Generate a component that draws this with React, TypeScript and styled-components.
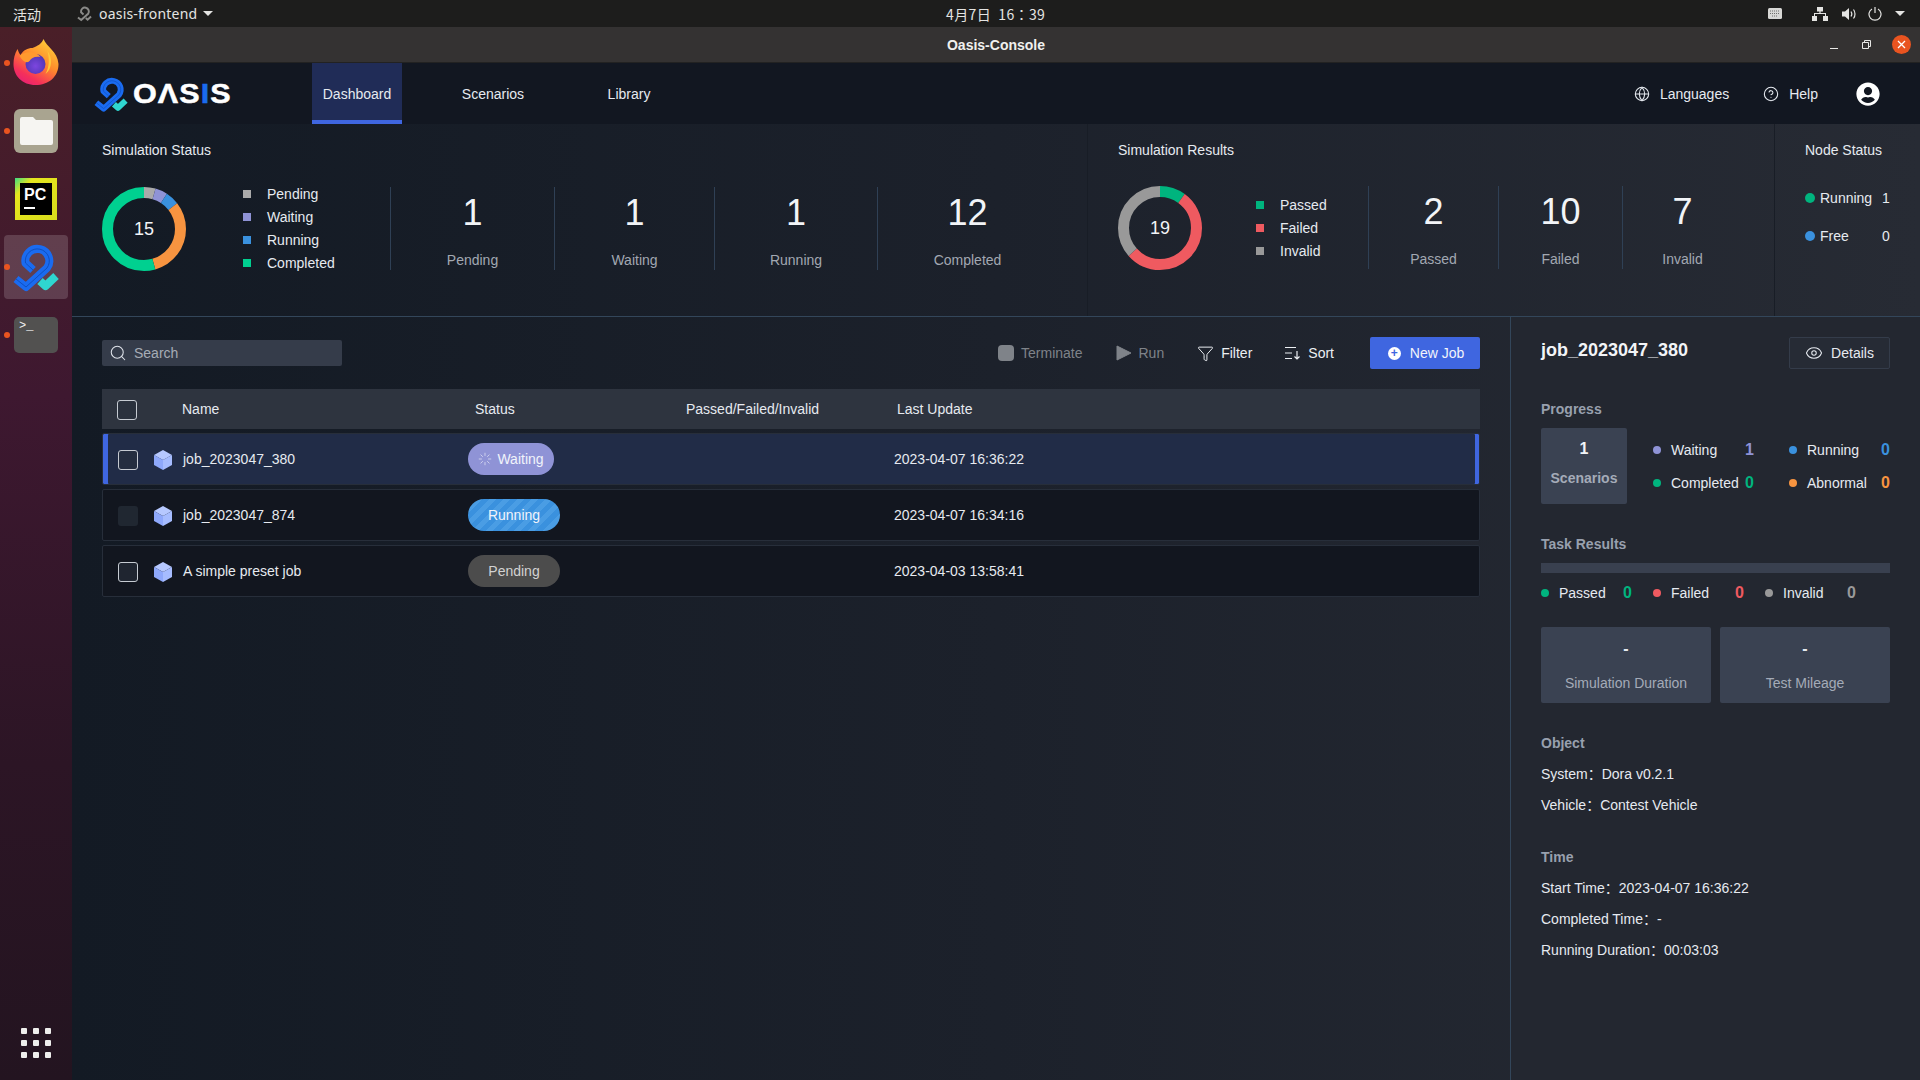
import styled, { createGlobalStyle } from "styled-components";
import { CircleHelp, Eye, Filter, Globe, Loader, Search } from "lucide-react";
import { FaUserCircle } from "react-icons/fa";

const GlobalStyle = createGlobalStyle`
    html, body {
        margin: 0;
        height: 100%;
        overflow: hidden;
        background: #141b25;
    }
    * {
        box-sizing: border-box;
    }
    body {
        font-family: "Liberation Sans", "Noto Sans CJK SC", sans-serif;
        font-size: 14px;
        color: #e6eaf0;
    }
`;

const Screen = styled.div`
    width: 1920px;
    height: 1080px;
    display: flex;
    flex-direction: column;
`;

const TopBar = styled.div`
    height: 27px;
    flex: none;
    display: flex;
    align-items: center;
    background: #1d1d1c;
    color: #e4e4e2;
    font-family: "Noto Sans CJK SC", "Noto Sans", sans-serif;
    font-size: 14px;
`;

const Activities = styled.div`
    width: 76px;
    padding-left: 13px;
`;

const AppMenu = styled.div`
    width: 870px;
    display: flex;
    align-items: center;
    gap: 6px;
    font-family: "Noto Sans", sans-serif;
    letter-spacing: 0.2px;
`;

const Caret = styled.span`
    width: 0;
    height: 0;
    border-left: 5px solid transparent;
    border-right: 5px solid transparent;
    border-top: 5px solid #e4e4e2;
`;

const Clock = styled.div`
    font-family: "Noto Sans CJK TC", "Noto Sans CJK SC", sans-serif;
    font-size: 14px;
    letter-spacing: 0.4px;
    white-space: pre;
`;

const Tray = styled.div`
    margin-left: auto;
    display: flex;
    align-items: center;
    padding-right: 15px;
`;

const TrayIcon = styled.svg<{ $gap: number }>`
    margin-left: ${(p) => p.$gap}px;
    display: block;
`;

const Desktop = styled.div`
    flex: 1;
    display: flex;
    min-height: 0;
`;

const Dock = styled.div`
    width: 72px;
    flex: none;
    display: flex;
    flex-direction: column;
    align-items: center;
    padding-top: 4px;
    background: linear-gradient(180deg, #4a1f28 0%, #3e1830 35%, #2c1525 70%, #231420 100%);
`;

const DockItem = styled.div<{ $active?: boolean }>`
    position: relative;
    width: 64px;
    height: 64px;
    margin-bottom: 4px;
    display: flex;
    align-items: center;
    justify-content: center;
    border-radius: 4px;
    background: ${(p) => (p.$active ? "rgba(255,255,255,0.16)" : "transparent")};
`;

const RunDot = styled.span`
    position: absolute;
    left: 0;
    top: 29px;
    width: 6px;
    height: 6px;
    border-radius: 50%;
    background: #e95420;
`;

const AppsGrid = styled.div`
    margin-top: auto;
    margin-bottom: 22px;
    display: grid;
    grid-template-columns: repeat(3, 6px);
    gap: 6px;
`;

const AppsDot = styled.span`
    width: 6px;
    height: 6px;
    border-radius: 1px;
    background: #eeeeec;
`;

const FirefoxSvg = styled.svg`
    margin-bottom: 3px;
`;

const FilesIcon = styled.div`
    width: 44px;
    height: 44px;
    border-radius: 6px;
    background: #a9a490;
    display: flex;
    align-items: center;
    justify-content: center;
`;

const TerminalIcon = styled.div`
    width: 44px;
    height: 36px;
    border-radius: 5px;
    background: #525150;
    color: #f0f0f0;
    font-family: "Liberation Mono", monospace;
    font-size: 12px;
    line-height: 12px;
    padding: 3px 0 0 5px;
    white-space: pre;
`;

const PyCharmIcon = styled.div`
    width: 42px;
    height: 42px;
    padding: 5px;
    background: linear-gradient(135deg, #3ddc84 0%, #e6e61e 22%, #d8dc1c 100%);
`;

const PyCharmInner = styled.div`
    width: 100%;
    height: 100%;
    background: #000;
    color: #fff;
    font-weight: 700;
    font-size: 16px;
    line-height: 15px;
    padding: 4px 0 0 4px;
`;

const PyCharmBar = styled.div`
    width: 11px;
    height: 2px;
    margin-top: 5px;
    background: #fff;
`;

const AppWindow = styled.div`
    flex: 1;
    min-width: 0;
    display: flex;
    flex-direction: column;
`;

const TitleBar = styled.div`
    position: relative;
    height: 36px;
    flex: none;
    display: flex;
    align-items: center;
    justify-content: center;
    background: #343232;
    border-bottom: 1px solid #222;
    font-weight: 700;
    font-size: 14px;
    color: #f0f0ee;
`;

const WindowButtons = styled.div`
    position: absolute;
    right: 9px;
    top: 8px;
    display: flex;
    align-items: center;
    gap: 21px;
`;

const RestoreIcon = styled.svg`
    margin-left: 3px;
    margin-right: -3px;
`;

const CloseButton = styled.div`
    width: 19px;
    height: 19px;
    margin-left: 3px;
    border-radius: 50%;
    background: #e95420;
    display: flex;
    align-items: center;
    justify-content: center;
`;

const Nav = styled.div`
    height: 61px;
    flex: none;
    display: flex;
    align-items: stretch;
    padding-left: 20px;
    background: #121721;
`;

const Logo = styled.div`
    width: 220px;
    display: flex;
    align-items: center;
    gap: 3px;
`;

const LogoText = styled.span`
    font-family: "Liberation Sans", sans-serif;
    font-weight: 700;
    font-size: 28px;
    letter-spacing: 1px;
    color: #fff;
    -webkit-text-stroke: 0.5px currentColor;
    transform: scaleX(1.09);
    transform-origin: left center;
`;

const LogoAccent = styled.span`
    color: #1a6bf0;
`;

const Tabs = styled.div`
    display: flex;
    gap: 46px;
`;

const Tab = styled.div<{ $active?: boolean }>`
    width: 90px;
    display: flex;
    align-items: center;
    justify-content: center;
    background: ${(p) => (p.$active ? "#202c57" : "transparent")};
    border-bottom: 4px solid ${(p) => (p.$active ? "#3f66e0" : "transparent")};
    border-top: 4px solid transparent;
`;

const NavRight = styled.div`
    margin-left: auto;
    padding-right: 40px;
    display: flex;
    align-items: center;
`;

const NavLink = styled.div<{ $gap: number }>`
    display: flex;
    align-items: center;
    gap: 10px;
    margin-right: ${(p) => p.$gap}px;
`;

const Content = styled.div`
    flex: 1;
    min-height: 0;
    display: flex;
    flex-direction: column;
    background: linear-gradient(90deg, #131a24 0%, #1c212b 50%, #272b34 100%);
`;

const StatsBar = styled.div`
    height: 193px;
    flex: none;
    display: flex;
    border-bottom: 1px solid #33465a;
`;

const StatsPanel = styled.div<{ $w?: number; $border?: boolean }>`
    width: ${(p) => (p.$w ? `${p.$w}px` : "auto")};
    flex: ${(p) => (p.$w ? "none" : "1")};
    padding: 18px 0 0 30px;
    border-right: ${(p) => (p.$border ? "1px solid #181d26" : "none")};
`;

const PanelTitle = styled.div`
    line-height: 16px;
    font-size: 14px;
`;

const PanelBody = styled.div<{ $top: number }>`
    display: flex;
    height: 84px;
    margin-top: ${(p) => p.$top}px;
`;

const DonutBox = styled.div`
    position: relative;
    width: 84px;
    height: 84px;
    flex: none;
`;

const DonutLabel = styled.div`
    position: absolute;
    inset: 0;
    display: flex;
    align-items: center;
    justify-content: center;
    font-size: 18px;
    color: #f2f4f7;
`;

const Legend = styled.div<{ $w: number; $left: number; $lift?: number }>`
    width: ${(p) => p.$w}px;
    height: 84px;
    margin-left: ${(p) => p.$left}px;
    margin-top: ${(p) => -(p.$lift ?? 0)}px;
    display: flex;
    flex-direction: column;
    justify-content: center;
`;

const LegendRow = styled.div`
    height: 23px;
    flex: none;
    display: flex;
    align-items: center;
    gap: 16px;
`;

const LegendSquare = styled.span<{ $c: string }>`
    width: 8px;
    height: 8px;
    background: ${(p) => p.$c};
`;

const StatCell = styled.div<{ $w: number }>`
    width: ${(p) => p.$w}px;
    height: 83px;
    display: flex;
    flex-direction: column;
    align-items: center;
    padding-top: 6px;
    border-left: 1px solid #2f4055;
`;

const StatNumber = styled.div`
    font-size: 36px;
    line-height: 40px;
    color: #f2f4f7;
`;

const StatLabel = styled.div`
    margin-top: 19px;
    line-height: 16px;
    color: #a2a8b2;
`;

const NodeRows = styled.div`
    margin-top: 21px;
`;

const NodeRow = styled.div`
    height: 38px;
    display: grid;
    grid-template-columns: 15px 62px auto;
    align-items: center;
`;

const Dot = styled.span<{ $c: string; $size?: number }>`
    width: ${(p) => p.$size ?? 8}px;
    height: ${(p) => p.$size ?? 8}px;
    border-radius: 50%;
    background: ${(p) => p.$c};
`;

const Main = styled.div`
    flex: 1;
    min-height: 0;
    display: flex;
`;

const JobsPane = styled.div`
    flex: 1;
    min-width: 0;
    padding: 20px 30px 0;
`;

const Toolbar = styled.div`
    height: 32px;
    display: flex;
    align-items: center;
`;

const SearchBox = styled.div`
    width: 240px;
    height: 26px;
    display: flex;
    align-items: center;
    gap: 7px;
    padding-left: 7px;
    border-radius: 2px;
    background: #353c4a;
    color: #a6acb6;
`;

const ToolActions = styled.div`
    margin-left: auto;
    display: flex;
    align-items: center;
    gap: 33px;
`;

const ToolButton = styled.div<{ $off?: boolean }>`
    display: flex;
    align-items: center;
    gap: 7px;
    color: ${(p) => (p.$off ? "#7f8389" : "#eceff3")};
`;

const StopShape = styled.span`
    width: 16px;
    height: 16px;
    border-radius: 4px;
    background: #7f8389;
`;

const NewJobButton = styled.div`
    width: 110px;
    height: 32px;
    margin-left: 3px;
    padding-left: 2px;
    display: flex;
    align-items: center;
    justify-content: center;
    gap: 9px;
    border-radius: 2px;
    background: #3f66e0;
    color: #f2f4fb;
`;

const PlusCircle = styled.span`
    width: 13px;
    height: 13px;
    border-radius: 50%;
    background: #fff;
    color: #3f66e0;
    font-weight: 700;
    font-size: 12px;
    line-height: 13px;
    text-align: center;
`;

const TableHead = styled.div`
    height: 40px;
    margin-top: 20px;
    display: grid;
    grid-template-columns: 65px 293px 211px 211px 1fr;
    align-items: center;
    padding-left: 15px;
    background: #2e343f;
`;

const CheckBox = styled.span<{ $muted?: boolean }>`
    display: block;
    width: 20px;
    height: 20px;
    margin-top: 1px;
    border-radius: 3px;
    border: ${(p) => (p.$muted ? "none" : "1px solid #c6cbd2")};
    background: ${(p) => (p.$muted ? "#202731" : "rgba(40,48,60,0.6)")};
`;

const Rows = styled.div`
    margin-top: 4px;
    display: flex;
    flex-direction: column;
    gap: 4px;
`;

const Row = styled.div<{ $selected?: boolean }>`
    height: 52px;
    display: grid;
    grid-template-columns: 36px 29px 285px 426px 1fr;
    align-items: center;
    padding-left: 15px;
    border: 1px solid #272e3a;
    border-radius: 2px;
    background: ${(p) => (p.$selected ? "#212c47" : "#12161f")};
    box-shadow: ${(p) => (p.$selected ? "inset 5px 0 #3f66e0, inset -4px 0 #3f66e0" : "none")};
`;

const CubeIcon = styled.svg`
    margin-top: 2px;
`;

const Pill = styled.div<{ $kind: "waiting" | "running" | "pending" }>`
    width: ${(p) => (p.$kind === "waiting" ? 86 : 92)}px;
    height: 32px;
    border-radius: 16px;
    display: flex;
    align-items: center;
    justify-content: center;
    gap: 5px;
    color: ${(p) => (p.$kind === "pending" ? "#d2d2d2" : "#f1f3fb")};
    background: ${(p) =>
        p.$kind === "waiting"
            ? "#8f93d6"
            : p.$kind === "pending"
              ? "#4c4c4c"
              : "repeating-linear-gradient(135deg, #3a91de 0 5px, #4a9de4 5px 10px)"};
`;

const DetailPane = styled.div`
    width: 410px;
    flex: none;
    padding: 20px 30px 0;
    border-left: 1px solid #33465a;
    background: #232730;
`;

const DetailHead = styled.div`
    height: 32px;
    display: flex;
    align-items: flex-start;
    justify-content: space-between;
`;

const JobTitle = styled.div`
    font-size: 18px;
    font-weight: 700;
    line-height: 26px;
    color: #f2f4f7;
`;

const DetailsButton = styled.div`
    width: 101px;
    height: 32px;
    display: flex;
    align-items: center;
    justify-content: center;
    gap: 8px;
    border: 1px solid #343c4a;
    border-radius: 2px;
    background: #262b35;
`;

const SectionTitle = styled.div<{ $top: number }>`
    margin-top: ${(p) => p.$top}px;
    font-weight: 700;
    line-height: 16px;
    color: #98a0ae;
`;

const ProgressRow = styled.div`
    margin-top: 11px;
    display: flex;
    align-items: center;
`;

const ScenarioBox = styled.div`
    width: 86px;
    height: 76px;
    flex: none;
    display: flex;
    flex-direction: column;
    align-items: center;
    padding-top: 11px;
    border-radius: 2px;
    background: #3a4252;
`;

const ScenarioCount = styled.div`
    font-size: 16px;
    font-weight: 700;
    line-height: 20px;
    color: #f2f4f7;
`;

const ScenarioLabel = styled.div`
    margin-top: 11px;
    font-weight: 700;
    line-height: 16px;
    color: #a4abb8;
`;

const ProgressGrid = styled.div`
    margin-left: 26px;
    flex: 1;
    display: grid;
    grid-template-columns: 101px 101px;
    column-gap: 35px;
    row-gap: 13px;
`;

const ProgressItem = styled.div`
    height: 20px;
    display: grid;
    grid-template-columns: 18px 1fr auto;
    align-items: center;
`;

const Count = styled.span<{ $c: string }>`
    font-size: 16px;
    font-weight: 700;
    color: ${(p) => p.$c};
`;

const ResultBar = styled.div`
    height: 10px;
    margin-top: 11px;
    background: #39404f;
`;

const ResultLegend = styled.div`
    margin-top: 10px;
    display: grid;
    grid-template-columns: repeat(3, 112px);
`;

const ResultItem = styled.div`
    height: 20px;
    display: grid;
    grid-template-columns: 18px 64px auto;
    align-items: center;
`;

const MetricRow = styled.div`
    margin-top: 24px;
    display: grid;
    grid-template-columns: 170px 170px;
    column-gap: 9px;
`;

const MetricBox = styled.div`
    height: 76px;
    display: flex;
    flex-direction: column;
    align-items: center;
    padding-top: 12px;
    border-radius: 2px;
    background: #3a4252;
`;

const MetricValue = styled.div`
    font-size: 16px;
    font-weight: 700;
    line-height: 20px;
    color: #e6eaf0;
`;

const MetricLabel = styled.div`
    margin-top: 16px;
    line-height: 16px;
    color: #a4abb8;
`;

const InfoRow = styled.div`
    margin-top: 15px;
    line-height: 16px;
`;

interface Slice {
    from: number;
    to: number;
    color: string;
}

const Donut = ({ total, slices }: { total: number; slices: Slice[] }) => {
    const r = 36.5;
    const len = 2 * Math.PI * r;
    return (
        <DonutBox>
            <svg width="84" height="84" viewBox="0 0 84 84">
                <g transform="rotate(-90 42 42)">
                    {slices.map((s) => (
                        <circle
                            key={s.from}
                            cx="42"
                            cy="42"
                            r={r}
                            fill="none"
                            stroke={s.color}
                            strokeWidth="11"
                            strokeDasharray={`${((s.to - s.from) / 360) * len} ${len}`}
                            strokeDashoffset={-(s.from / 360) * len}
                        />
                    ))}
                </g>
            </svg>
            <DonutLabel>{total}</DonutLabel>
        </DonutBox>
    );
};

const loopPath = "M16 47 L26 55 L47 36 A12 12 0 1 0 25.5 31 L33 38";

const OasisMark = ({ size }: { size: number }) => (
    <svg width={size} height={size} viewBox="10 9 52 52">
        <path d={loopPath} fill="none" stroke="#1a6bf0" strokeWidth="8" strokeLinejoin="round" />
        <path d={loopPath} fill="none" stroke="#0f4fc0" strokeWidth="1" />
        <path d="M40 49 L45.5 54 L56 44" fill="none" stroke="#2fd6d0" strokeWidth="8" strokeLinejoin="round" />
    </svg>
);

const FirefoxIcon = () => (
    <FirefoxSvg width="46" height="46" viewBox="0 0 45 46">
        <defs>
            <linearGradient id="ffBody" x1="0.8" y1="0" x2="0.2" y2="1">
                <stop offset="0" stopColor="#ffd23a" />
                <stop offset="0.45" stopColor="#ff8a2b" />
                <stop offset="0.8" stopColor="#f5305a" />
                <stop offset="1" stopColor="#e61f78" />
            </linearGradient>
            <radialGradient id="ffGlobe" cx="0.5" cy="0.6" r="0.6">
                <stop offset="0" stopColor="#7d46e0" />
                <stop offset="1" stopColor="#4c36b0" />
            </radialGradient>
        </defs>
        <path
            d="M30 0 C33 8 44 12 45 25 C45 38 35 46 22 46 C9 46 0 37 0 25 C0 20 1 15 4 10 C5 13 6 15 7 16 C10 11 14 9 19 9 C24 7 28 5 30 0 Z"
            fill="url(#ffBody)"
        />
        <circle cx="22" cy="25" r="10" fill="url(#ffGlobe)" />
        <path d="M6 17 C11 12 22 12 27 18 C21 17 18 19 16 22 C13 25 9 22 6 17 Z" fill="#ff9a2e" />
        <path d="M34 12 C39 18 39 30 32 35 C36 28 36 20 34 12 Z" fill="#ffc83a" />
    </FirefoxSvg>
);

const Cube = () => (
    <CubeIcon width="18" height="20" viewBox="0 0 18 20">
        <path d="M9 0 L18 5 L9 10 L0 5 Z" fill="#b6c8ff" />
        <path d="M0 5 L9 10 V20 L0 15 Z" fill="#8ea8fb" />
        <path d="M18 5 L9 10 V20 L18 15 Z" fill="#a6bcff" />
    </CubeIcon>
);

const jobs = [
    { name: "job_2023047_380", status: "waiting" as const, date: "2023-04-07 16:36:22" },
    { name: "job_2023047_874", status: "running" as const, date: "2023-04-07 16:34:16" },
    { name: "A simple preset job", status: "pending" as const, date: "2023-04-03 13:58:41" },
];

const statusText = { waiting: "Waiting", running: "Running", pending: "Pending" };

const statusLegend = [
    { label: "Pending", color: "#aaaaaa" },
    { label: "Waiting", color: "#8f93d6" },
    { label: "Running", color: "#3a91de" },
    { label: "Completed", color: "#00d090" },
];

const resultLegend = [
    { label: "Passed", color: "#00b47e" },
    { label: "Failed", color: "#ef5a60" },
    { label: "Invalid", color: "#999999" },
];

const statusCells = [
    { value: 1, label: "Pending", w: 164 },
    { value: 1, label: "Waiting", w: 160 },
    { value: 1, label: "Running", w: 163 },
    { value: 12, label: "Completed", w: 180 },
];

const resultCells = [
    { value: 2, label: "Passed", w: 130 },
    { value: 10, label: "Failed", w: 124 },
    { value: 7, label: "Invalid", w: 120 },
];

const progressItems = [
    { label: "Waiting", value: 1, color: "#8f93d6" },
    { label: "Running", value: 0, color: "#3a91de" },
    { label: "Completed", value: 0, color: "#00b47e" },
    { label: "Abnormal", value: 0, color: "#f79440" },
];

const taskItems = [
    { label: "Passed", color: "#00b47e" },
    { label: "Failed", color: "#ef5a60" },
    { label: "Invalid", color: "#999999" },
];

const App = () => {
    return (
        <Screen>
            <GlobalStyle />
            <TopBar>
                <Activities>活动</Activities>
                <AppMenu>
                    <svg width="17" height="17" viewBox="10 9 52 52">
                        <path d={loopPath} fill="none" stroke="#8a8a88" strokeWidth="6" />
                        <path d="M40 49 L45.5 54 L56 44" fill="none" stroke="#8a8a88" strokeWidth="6" />
                    </svg>
                    oasis-frontend
                    <Caret />
                </AppMenu>
                <Clock>4月7日  16：39</Clock>
                <Tray>
                    <TrayIcon $gap={0} width="14" height="11" viewBox="0 0 14 11">
                        <rect width="14" height="11" rx="1.5" fill="#d8d8d6" />
                        <path
                            d="M2 3 H12 M2 5.5 H12 M4 8 H10"
                            stroke="#6e6e6c"
                            strokeWidth="1"
                            strokeDasharray="1 1"
                        />
                    </TrayIcon>
                    <TrayIcon $gap={30} width="16" height="14" viewBox="0 0 16 14">
                        <path
                            d="M5 0 H11 V4.5 H8.6 V6 H14 V9 H16 V14 H11 V9 H13 V7 H3 V9 H5 V14 H0 V9 H2 V6 H7.4 V4.5 H5 Z"
                            fill="#e4e4e2"
                        />
                    </TrayIcon>
                    <TrayIcon $gap={14} width="15" height="14" viewBox="0 0 15 14">
                        <path d="M0 4.5 H3 L7 1 V13 L3 9.5 H0 Z" fill="#e4e4e2" />
                        <path
                            d="M9 4.5 C10 6 10 8 9 9.5 M11.5 2.5 C13.5 5 13.5 9 11.5 11.5"
                            fill="none"
                            stroke="#e4e4e2"
                            strokeWidth="1.2"
                        />
                    </TrayIcon>
                    <TrayIcon $gap={11} width="14" height="14" viewBox="0 0 14 14">
                        <path
                            d="M4 2 A6 6 0 1 0 10 2 M7 0 V6"
                            fill="none"
                            stroke="#e4e4e2"
                            strokeWidth="1.2"
                        />
                    </TrayIcon>
                    <TrayIcon $gap={13} width="10" height="5" viewBox="0 0 10 5">
                        <path d="M0 0 H10 L5 5 Z" fill="#e4e4e2" />
                    </TrayIcon>
                </Tray>
            </TopBar>
            <Desktop>
                <Dock>
                    <DockItem>
                        <RunDot />
                        <FirefoxIcon />
                    </DockItem>
                    <DockItem>
                        <RunDot />
                        <FilesIcon>
                            <svg width="33" height="28" viewBox="0 0 33 28">
                                <path
                                    d="M2 0 H13 L16 3 H31 A2 2 0 0 1 33 5 V26 A2 2 0 0 1 31 28 H2 A2 2 0 0 1 0 26 V2 A2 2 0 0 1 2 0 Z"
                                    fill="#f6f5f2"
                                />
                            </svg>
                        </FilesIcon>
                    </DockItem>
                    <DockItem>
                        <PyCharmIcon>
                            <PyCharmInner>
                                PC
                                <PyCharmBar />
                            </PyCharmInner>
                        </PyCharmIcon>
                    </DockItem>
                    <DockItem $active>
                        <RunDot />
                        <OasisMark size={52} />
                    </DockItem>
                    <DockItem>
                        <RunDot />
                        <TerminalIcon>{">_"}</TerminalIcon>
                    </DockItem>
                    <AppsGrid>
                        {Array.from({ length: 9 }).map((_, i) => (
                            <AppsDot key={i} />
                        ))}
                    </AppsGrid>
                </Dock>
                <AppWindow>
                    <TitleBar>
                        Oasis-Console
                        <WindowButtons>
                            <svg width="8" height="8" viewBox="0 0 8 8">
                                <path d="M0 7.5 H8" stroke="#e8e8e6" />
                            </svg>
                            <RestoreIcon width="9" height="9" viewBox="0 0 9 9">
                                <path
                                    d="M0.5 2.5 H6.5 V8.5 H0.5 Z M2.5 2.5 V0.5 H8.5 V6.5 H6.5"
                                    fill="none"
                                    stroke="#e8e8e6"
                                />
                            </RestoreIcon>
                            <CloseButton>
                                <svg width="9" height="9" viewBox="0 0 9 9">
                                    <path d="M1 1 L8 8 M8 1 L1 8" stroke="#fff" strokeWidth="1.3" />
                                </svg>
                            </CloseButton>
                        </WindowButtons>
                    </TitleBar>
                    <Nav>
                        <Logo>
                            <OasisMark size={38} />
                            <LogoText>
                                OΛS<LogoAccent>I</LogoAccent>S
                            </LogoText>
                        </Logo>
                        <Tabs>
                            <Tab $active>Dashboard</Tab>
                            <Tab>Scenarios</Tab>
                            <Tab>Library</Tab>
                        </Tabs>
                        <NavRight>
                            <NavLink $gap={34}>
                                <Globe size={16} strokeWidth={1.6} />
                                Languages
                            </NavLink>
                            <NavLink $gap={38}>
                                <CircleHelp size={16} strokeWidth={1.6} />
                                Help
                            </NavLink>
                            <FaUserCircle size={24} color="#fff" />
                        </NavRight>
                    </Nav>
                    <Content>
                        <StatsBar>
                            <StatsPanel $w={1016} $border>
                                <PanelTitle>Simulation Status</PanelTitle>
                                <PanelBody $top={29}>
                                    <Donut
                                        total={15}
                                        slices={[
                                            { from: 0, to: 16, color: "#aaaaaa" },
                                            { from: 16, to: 33, color: "#8f93d6" },
                                            { from: 33, to: 52, color: "#3a91de" },
                                            { from: 52, to: 164, color: "#f79440" },
                                            { from: 164, to: 360, color: "#00d090" },
                                        ]}
                                    />
                                    <Legend $w={147} $left={57} $lift={1}>
                                        {statusLegend.map((l) => (
                                            <LegendRow key={l.label}>
                                                <LegendSquare $c={l.color} />
                                                {l.label}
                                            </LegendRow>
                                        ))}
                                    </Legend>
                                    {statusCells.map((c) => (
                                        <StatCell key={c.label} $w={c.w}>
                                            <StatNumber>{c.value}</StatNumber>
                                            <StatLabel>{c.label}</StatLabel>
                                        </StatCell>
                                    ))}
                                </PanelBody>
                            </StatsPanel>
                            <StatsPanel $w={687} $border>
                                <PanelTitle>Simulation Results</PanelTitle>
                                <PanelBody $top={28}>
                                    <Donut
                                        total={19}
                                        slices={[
                                            { from: 0, to: 36, color: "#00b47e" },
                                            { from: 36, to: 228, color: "#ef5a60" },
                                            { from: 228, to: 360, color: "#999999" },
                                        ]}
                                    />
                                    <Legend $w={112} $left={54}>
                                        {resultLegend.map((l) => (
                                            <LegendRow key={l.label}>
                                                <LegendSquare $c={l.color} />
                                                {l.label}
                                            </LegendRow>
                                        ))}
                                    </Legend>
                                    {resultCells.map((c) => (
                                        <StatCell key={c.label} $w={c.w}>
                                            <StatNumber>{c.value}</StatNumber>
                                            <StatLabel>{c.label}</StatLabel>
                                        </StatCell>
                                    ))}
                                </PanelBody>
                            </StatsPanel>
                            <StatsPanel>
                                <PanelTitle>Node Status</PanelTitle>
                                <NodeRows>
                                    <NodeRow>
                                        <Dot $c="#00b47e" $size={10} />
                                        Running
                                        <span>1</span>
                                    </NodeRow>
                                    <NodeRow>
                                        <Dot $c="#3a91de" $size={10} />
                                        Free
                                        <span>0</span>
                                    </NodeRow>
                                </NodeRows>
                            </StatsPanel>
                        </StatsBar>
                        <Main>
                            <JobsPane>
                                <Toolbar>
                                    <SearchBox>
                                        <Search size={18} strokeWidth={1.4} color="#dfe3ea" />
                                        Search
                                    </SearchBox>
                                    <ToolActions>
                                        <ToolButton $off>
                                            <StopShape />
                                            Terminate
                                        </ToolButton>
                                        <ToolButton $off>
                                            <svg width="16" height="16" viewBox="0 0 16 16">
                                                <path d="M1 1 L15 8 L1 15 Z" fill="#7f8389" stroke="#7f8389" strokeLinejoin="round" />
                                            </svg>
                                            Run
                                        </ToolButton>
                                        <ToolButton>
                                            <Filter size={17} strokeWidth={1.4} />
                                            Filter
                                        </ToolButton>
                                        <ToolButton>
                                            <svg width="16" height="16" viewBox="0 0 16 16">
                                                <path
                                                    d="M0 2.5 H11 M0 8 H7 M0 13.5 H7 M12 6 V14 M9.5 11.5 L12 14 L14.5 11.5"
                                                    fill="none"
                                                    stroke="#eceff3"
                                                    strokeWidth="1.2"
                                                />
                                            </svg>
                                            Sort
                                        </ToolButton>
                                        <NewJobButton>
                                            <PlusCircle>+</PlusCircle>
                                            New Job
                                        </NewJobButton>
                                    </ToolActions>
                                </Toolbar>
                                <TableHead>
                                    <CheckBox />
                                    <span>Name</span>
                                    <span>Status</span>
                                    <span>Passed/Failed/Invalid</span>
                                    <span>Last Update</span>
                                </TableHead>
                                <Rows>
                                    {jobs.map((job) => (
                                        <Row key={job.name} $selected={job.status === "waiting"}>
                                            <CheckBox $muted={job.status === "running"} />
                                            <Cube />
                                            <span>{job.name}</span>
                                            <Pill $kind={job.status}>
                                                {job.status === "waiting" && (
                                                    <Loader size={14} strokeWidth={1.5} color="#d5d7f0" />
                                                )}
                                                {statusText[job.status]}
                                            </Pill>
                                            <span>{job.date}</span>
                                        </Row>
                                    ))}
                                </Rows>
                            </JobsPane>
                            <DetailPane>
                                <DetailHead>
                                    <JobTitle>job_2023047_380</JobTitle>
                                    <DetailsButton>
                                        <Eye size={18} strokeWidth={1.4} />
                                        Details
                                    </DetailsButton>
                                </DetailHead>
                                <SectionTitle $top={32}>Progress</SectionTitle>
                                <ProgressRow>
                                    <ScenarioBox>
                                        <ScenarioCount>1</ScenarioCount>
                                        <ScenarioLabel>Scenarios</ScenarioLabel>
                                    </ScenarioBox>
                                    <ProgressGrid>
                                        {progressItems.map((item) => (
                                            <ProgressItem key={item.label}>
                                                <Dot $c={item.color} />
                                                {item.label}
                                                <Count $c={item.color}>{item.value}</Count>
                                            </ProgressItem>
                                        ))}
                                    </ProgressGrid>
                                </ProgressRow>
                                <SectionTitle $top={32}>Task Results</SectionTitle>
                                <ResultBar />
                                <ResultLegend>
                                    {taskItems.map((item) => (
                                        <ResultItem key={item.label}>
                                            <Dot $c={item.color} />
                                            {item.label}
                                            <Count $c={item.color}>0</Count>
                                        </ResultItem>
                                    ))}
                                </ResultLegend>
                                <MetricRow>
                                    <MetricBox>
                                        <MetricValue>-</MetricValue>
                                        <MetricLabel>Simulation Duration</MetricLabel>
                                    </MetricBox>
                                    <MetricBox>
                                        <MetricValue>-</MetricValue>
                                        <MetricLabel>Test Mileage</MetricLabel>
                                    </MetricBox>
                                </MetricRow>
                                <SectionTitle $top={32}>Object</SectionTitle>
                                <InfoRow>System：Dora v0.2.1</InfoRow>
                                <InfoRow>Vehicle：Contest Vehicle</InfoRow>
                                <SectionTitle $top={36}>Time</SectionTitle>
                                <InfoRow>Start Time：2023-04-07 16:36:22</InfoRow>
                                <InfoRow>Completed Time：-</InfoRow>
                                <InfoRow>Running Duration：00:03:03</InfoRow>
                            </DetailPane>
                        </Main>
                    </Content>
                </AppWindow>
            </Desktop>
        </Screen>
    );
};

export default App;
